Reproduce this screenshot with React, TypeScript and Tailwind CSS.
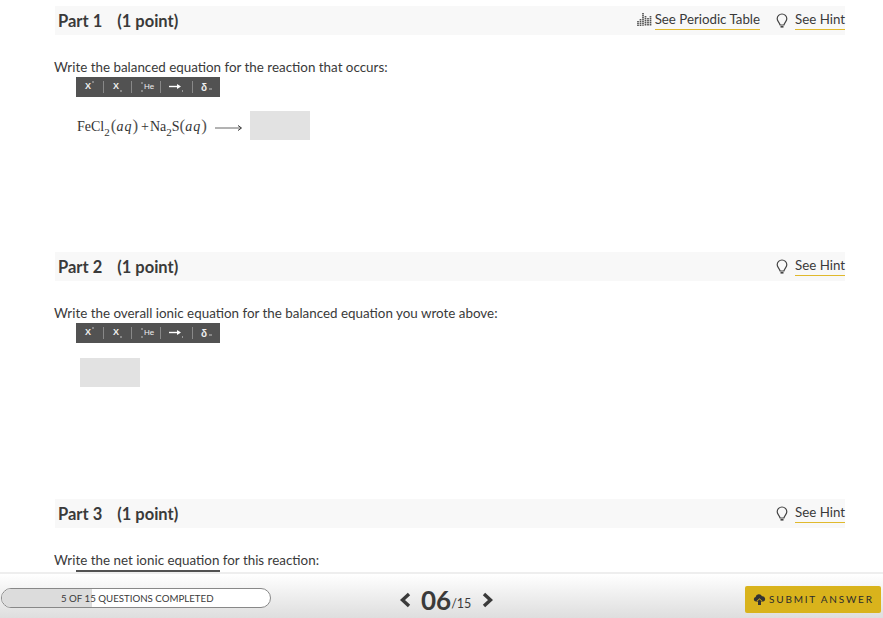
import React from "react";

const serif = "font-['Liberation_Serif',serif]";

function BarsIcon() {
  // periodic table glyph: stack of dotted columns
  const cols = [
    [9, 14],
    [7, 14],
    [1, 14],
    [4, 14],
    [6, 14],
    [4, 14],
  ];
  return (
    <svg width="15" height="14" viewBox="0 0 15 14" className="mr-[3px] mt-[-4px]">
      {cols.map(([top, bottom], i) => (
        <line
          key={i}
          x1={1 + i * 2.5}
          x2={1 + i * 2.5}
          y1={top}
          y2={bottom}
          stroke="#555"
          strokeWidth="1.700"
          strokeDasharray="1.400 0.500"
        />
      ))}
    </svg>
  );
}

function BulbIcon() {
  return (
    <svg width="12" height="15" viewBox="0 0 12 15" fill="none" stroke="#444" strokeWidth="1.200">
      <path d="M6 1a4.800 4.800 0 0 0-4.800 4.800c0 2.500 2.300 3.600 2.900 6.200h3.800c.6-2.600 2.900-3.700 2.900-6.200A4.800 4.800 0 0 0 6 1Z" />
      <path d="M4.500 13.800h3" strokeWidth="1.600" />
    </svg>
  );
}

function CloudIcon() {
  return (
    <svg width="13" height="11" viewBox="0 0 13 11" fill="#333">
      <path d="M3 7.600a2.400 2.400 0 0 1-.4-4.700A3.400 3.400 0 0 1 9 2.200a2.800 2.800 0 0 1 1.300 5.400Z" />
      <path d="M5 7h3v4H5Z" />
      <path d="M6.500 4.200 9.300 7H3.700Z" fill="#d9b31c" />
      <path d="M6.500 5.200 8.300 7H4.700Z" />
    </svg>
  );
}

function Sep({ className }: { className: string }) {
  return <span className={`h-3 w-px bg-[#888] ${className}`} />;
}

function Toolbar() {
  return (
    <div className="ml-[21px] flex h-5 w-[144px] shrink-0 items-center bg-[#525252] font-['Liberation_Sans',sans-serif] text-[9px] font-bold text-[#eeeeee]">
      <span className="ml-[9px] flex w-[17px] items-start">
        X<span className="ml-[1px] mt-[1px] h-[2px] w-[2px] bg-[#888]" />
      </span>
      <Sep className="ml-[1px]" />
      <span className="ml-[9px] flex w-[12px] items-end">
        X<span className="mb-[2px] ml-[1px] h-[2px] w-[2px] bg-[#888]" />
      </span>
      <Sep className="ml-[6px]" />
      <span className="ml-[9px] flex h-[10px] w-[2px] flex-col justify-between">
        <span className="h-[2px] w-[2px] bg-[#888]" />
        <span className="h-[2px] w-[2px] bg-[#888]" />
      </span>
      <span className="ml-[1px] w-[15px] text-[8px] font-normal">He</span>
      <Sep className="ml-[1px]" />
      <svg width="14" height="9" viewBox="0 0 14 9" className="ml-[8px]">
        <path d="M0 3.500h9" stroke="#fff" strokeWidth="1.400" />
        <path d="M8 1 12 3.500 8 6Z" fill="#fff" />
        <rect x="13" y="7" width="1.500" height="2" fill="#999" />
      </svg>
      <Sep className="ml-[9px]" />
      <span className="ml-[8px] text-[10px]">δ</span>
      <span className="ml-[2px] mt-[4px] h-[2px] w-[3px] bg-[#888]" />
    </div>
  );
}

function AnswerBox({ className }: { className: string }) {
  return <div className={`h-[29px] w-[60px] bg-[#e2e2e2] ${className}`} />;
}

function Equation() {
  return (
    <div className="ml-[22px] mt-[14px] flex h-[29px] items-center">
      <div className={`${serif} mt-[2px] flex w-[138px] items-baseline whitespace-nowrap text-[14px] text-[#333]`}>
        <span>FeCl</span>
        <span className="relative top-[5px] text-[11px]">2</span>
        <span className="ml-[1px] text-[17px] leading-none text-[#555]">(</span>
        <span className="italic tracking-[1px]">aq</span>
        <span className="text-[17px] leading-none text-[#555]">)</span>
        <span className="ml-[3px]">+</span>
        <span className="ml-[1px]">Na</span>
        <span className="relative top-[5px] text-[11px]">2</span>
        <span>S</span>
        <span className="text-[17px] leading-none text-[#555]">(</span>
        <span className="italic tracking-[1px]">aq</span>
        <span className="text-[17px] leading-none text-[#555]">)</span>
      </div>
      <svg width="28" height="9" viewBox="0 0 28 9" className="mt-[3px]">
        <path d="M0 5h26" stroke="#666" strokeWidth="1" />
        <path d="M23 2.500 26.500 5 23 7.500" fill="none" stroke="#333" strokeWidth="1" />
      </svg>
      <AnswerBox className="ml-[7px]" />
    </div>
  );
}

function PartHeader({ num, periodic }: { num: number; periodic?: boolean }) {
  return (
    <div className="flex h-[29px] shrink-0 items-center justify-between bg-[#f8f8f8] pl-[3px]">
      <div className="mt-[2px] text-[16.500px] font-bold text-[#3a3a3a]">
        Part {num}
        <span className="ml-[15px]">(1 point)</span>
      </div>
      <div className="flex items-center text-[13.300px] text-[#3a3a3a]">
        {periodic && (
          <div className="mr-[16px] flex items-center">
            <BarsIcon />
            <span className="border-b border-[#e0b92c] pb-[1px] leading-[17px]">See Periodic Table</span>
          </div>
        )}
        <BulbIcon />
        <span className="ml-[7px] border-b border-[#e0b92c] pb-[1px] leading-[17px]">See Hint</span>
      </div>
    </div>
  );
}

function Prompt({ text }: { text: string }) {
  return (
    <p className="ml-[-1px] mt-[22px] h-[20px] whitespace-nowrap text-[13.400px] leading-[20px] text-[#3a3a3a]">
      {text}
    </p>
  );
}

export default function App() {
  return (
    <div className="flex h-[618px] w-[883px] flex-col overflow-hidden bg-white font-['Lato',sans-serif]">
      <div className="min-h-0 flex-1 overflow-hidden pl-[55px] pr-[38px] pt-[6px]">
        <section className="h-[246px]">
          <PartHeader num={1} periodic />
          <Prompt text="Write the balanced equation for the reaction that occurs:" />
          <Toolbar />
          <Equation />
        </section>
        <section className="h-[247px]">
          <PartHeader num={2} />
          <Prompt text="Write the overall ionic equation for the balanced equation you wrote above:" />
          <Toolbar />
          <AnswerBox className="ml-[25px] mt-[15px]" />
        </section>
        <section>
          <PartHeader num={3} />
          <Prompt text="Write the net ionic equation for this reaction:" />
          <Toolbar />
        </section>
      </div>
      <footer className="relative flex h-[46px] shrink-0 items-center border-t-2 border-[#eeeeee] bg-gradient-to-b from-white to-[#dedede] pt-[4px]">
        <div className="relative ml-[1px] flex h-5 w-[270px] items-center overflow-hidden rounded-full border border-[#888] bg-white">
          <div className="h-full w-[90px] bg-[#dcdcdc]" />
          <span className="absolute left-[59px] top-[2px] text-[9.700px] leading-[14px] text-[#3a3a3a]">
            5 OF 15 QUESTIONS COMPLETED
          </span>
        </div>
        <div className="ml-[128px] mt-[4px] flex items-center text-[#3a3a3a]">
          <svg width="12" height="16" viewBox="0 0 12 16" fill="none" stroke="#3a3a3a" strokeWidth="3.400">
            <path d="M10 2 3.500 8l6.500 6" />
          </svg>
          <span className="ml-[10px] text-[26px] font-bold leading-none">06</span>
          <span className="mt-[9px] text-[12.500px] leading-none">/15</span>
          <svg width="12" height="16" viewBox="0 0 12 16" fill="none" stroke="#3a3a3a" strokeWidth="3.400" className="ml-[11px]">
            <path d="m2 2 6.500 6L2 14" />
          </svg>
        </div>
        <button className="absolute left-[745px] top-[12px] flex h-[27px] w-[136px] items-center rounded-[2px] bg-[#d9b31c] pl-[8px] text-[10px] font-normal tracking-[1.800px] text-[#2c2c2c]">
          <CloudIcon />
          <span className="ml-[3px]">SUBMIT ANSWER</span>
        </button>
      </footer>
    </div>
  );
}
